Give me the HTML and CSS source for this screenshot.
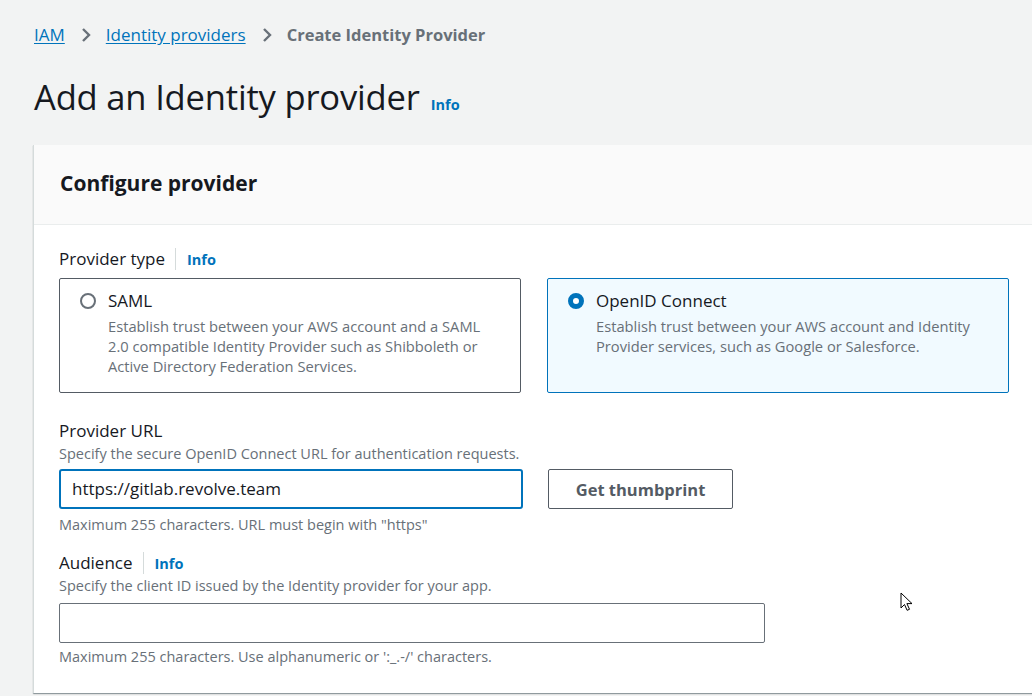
FILE: index.html
```html
<!DOCTYPE html>
<html>
<head>
<meta charset="utf-8">
<link rel="stylesheet" href="styles.css">
</head>
<body>
<div class="page">
  <nav class="crumbs">
    <a class="crumb-link" href="#">IAM</a>
    <svg class="chev" width="14" height="16" viewBox="0 0 14 16"><path d="M4 2l6 6-6 6" fill="none" stroke="#687078" stroke-width="2.4"/></svg>
    <a class="crumb-link" href="#">Identity providers</a>
    <svg class="chev" width="14" height="16" viewBox="0 0 14 16"><path d="M4 2l6 6-6 6" fill="none" stroke="#687078" stroke-width="2.4"/></svg>
    <span class="crumb-current">Create Identity Provider</span>
  </nav>
  <div class="title-row">
    <h1 class="title">Add an Identity provider</h1>
    <a class="info info-title" href="#">Info</a>
  </div>

  <section class="card">
    <div class="card-head">
      <h2 class="card-title">Configure provider</h2>
    </div>
    <div class="card-body">
      <div class="form">
        <div class="label-row">
          <span class="label">Provider type</span>
          <span class="divider"></span>
          <a class="info" href="#">Info</a>
        </div>
        <div class="tiles">
          <div class="tile">
            <div class="tile-row">
              <span class="radio"></span>
              <span class="tile-label">SAML</span>
            </div>
            <p class="tile-desc">Establish trust between your AWS account and a SAML 2.0 compatible Identity Provider such as Shibboleth or Active Directory Federation Services.</p>
          </div>
          <div class="tile tile-on">
            <div class="tile-row">
              <span class="radio radio-on"></span>
              <span class="tile-label">OpenID Connect</span>
            </div>
            <p class="tile-desc">Establish trust between your AWS account and Identity Provider services, such as Google or Salesforce.</p>
          </div>
        </div>

        <div class="field field-url">
          <div class="label-row"><span class="label">Provider URL</span></div>
          <p class="desc">Specify the secure OpenID Connect URL for authentication requests.</p>
          <div class="input-row">
            <div class="input input-focus url-input">https://gitlab.revolve.team</div>
            <button class="btn">Get thumbprint</button>
          </div>
          <p class="help help-url">Maximum 255 characters. URL must begin with "https"</p>
        </div>

        <div class="field field-aud">
          <div class="label-row">
            <span class="label">Audience</span>
            <span class="divider"></span>
            <a class="info" href="#">Info</a>
          </div>
          <p class="desc">Specify the client ID issued by the Identity provider for your app.</p>
          <div class="input aud-input"></div>
          <p class="help">Maximum 255 characters. Use alphanumeric or ':_.-/' characters.</p>
        </div>
      </div>
    </div>
  </section>
</div>
<svg class="cursor" width="14" height="20" viewBox="0 0 14 20"><path d="M1 1v15l3.5-3.5 2.6 5.8 2.4-1-2.6-5.7H12z" fill="#fff" stroke="#000" stroke-width="1"/></svg>
</body>
</html>
```

FILE: styles.css
```css
html, body {
  margin: 0;
  padding: 0;
  background: #f2f3f3;
  overflow: hidden;
  width: 1032px;
  height: 696px;
  font-family: "Open Sans", "Noto Sans", Arial, sans-serif;
  color: #16191f;
}
.page {
  padding: 24px 0 0 34px;
}
.crumbs {
  display: flex;
  align-items: center;
  height: 22px;
  font-size: 17px;
  line-height: 22px;
}
.crumb-link {
  color: #0073bb;
  text-decoration: underline;
  text-underline-offset: 2px;
}
.chev {
  margin: 0 13px 0 14px;
}
.crumb-current {
  color: #687078;
  font-weight: 700;
  font-size: 16.5px;
}
.title-row {
  display: flex;
  align-items: baseline;
  height: 44px;
  margin-top: 29px;
}
.title {
  margin: 0;
  font-size: 34.6px;
  line-height: 44px;
  font-weight: 400;
  letter-spacing: -0.2px;
}
.info {
  color: #0073bb;
  font-weight: 700;
  font-size: 14.5px;
  text-decoration: none;
}
.info-title {
  margin-left: 11px;
}
.card {
  margin-top: 26px;
  margin-left: -1px;
  width: 1100px;
  background: #fff;
  border-left: 1px solid #d5dbdb;
  box-shadow: 0 1px 1px 0 rgba(0,28,36,0.3), 1px 1px 1px 0 rgba(0,28,36,0.15);
}
.card-head {
  background: #fafafa;
  border-bottom: 1px solid #eaeded;
  padding: 24px 26px 27px 26px;
}
.card-title {
  margin: 0;
  font-size: 21px;
  line-height: 28px;
  font-weight: 700;
}
.card-body {
  padding: 23px 26px 26px 25px;
}
.form {
  width: 950px;
}
.label-row {
  display: flex;
  align-items: center;
  height: 22px;
}
.label {
  font-size: 17px;
  line-height: 22px;
}
.divider {
  width: 1px;
  height: 22px;
  background: #d5dbdb;
  margin: 0 11px 0 10px;
}
.tiles {
  display: grid;
  grid-template-columns: 1fr 1fr;
  gap: 26px;
  margin-top: 8px;
}
.tile {
  border: 1px solid #545b64;
  border-radius: 2px;
  padding: 11px 20px 15px 20px;
  height: 115px;
  box-sizing: border-box;
}
.tile-on {
  border-color: #0073bb;
  background: #f1faff;
}
.tile-row {
  display: flex;
  align-items: center;
  height: 22px;
}
.radio {
  width: 16px;
  height: 16px;
  box-sizing: border-box;
  border: 2px solid #687078;
  border-radius: 50%;
  background: #fff;
  margin-right: 12px;
  flex: none;
}
.radio-on {
  border: 5px solid #0073bb;
}
.tile-label {
  font-size: 17px;
  line-height: 22px;
}
.tile-desc {
  margin: 4px 0 0 28px;
  max-width: 385px;
  font-size: 14.7px;
  line-height: 20px;
  color: #687078;
}
.field-url {
  margin-top: 27px;
}
.field-aud {
  margin-top: 17px;
}
.desc {
  margin: 2px 0 0 0;
  font-size: 14.5px;
  line-height: 20px;
  color: #687078;
}
.input-row {
  display: flex;
  gap: 25px;
  margin-top: 5px;
}
.input {
  height: 40px;
  box-sizing: border-box;
  border: 1px solid #687078;
  border-radius: 2px;
  background: #fff;
  font-size: 17px;
  line-height: 36px;
  padding: 0 11px;
}
.input-focus {
  border: 2px solid #0073bb;
  border-radius: 3px;
}
.url-input {
  width: 464px;
}
.aud-input {
  width: 706px;
  margin-top: 7px;
}
.btn {
  width: 185px;
  height: 40px;
  box-sizing: border-box;
  border: 1px solid #545b64;
  border-radius: 2px;
  background: #fff;
  color: #545b64;
  font-family: inherit;
  font-weight: 700;
  font-size: 16.5px;
  padding: 0;
}
.help {
  margin: 4px 0 0 0;
  font-size: 14.5px;
  line-height: 20px;
  color: #687078;
}
.help-url {
  margin-top: 6px;
}
.cursor {
  position: absolute;
  left: 900px;
  top: 592px;
}
```
